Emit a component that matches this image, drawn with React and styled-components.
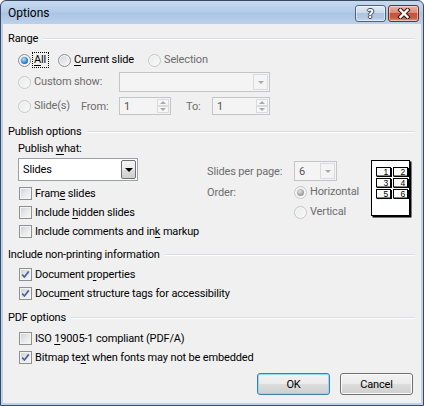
import styled, { createGlobalStyle } from "styled-components";

const GlobalStyle = createGlobalStyle`
  html, body {
    margin: 0;
    padding: 0;
    background: #ffffff;
  }
  body {
    font-family: Roboto, "Liberation Sans", sans-serif;
    font-size: 11px;
    letter-spacing: -0.15px;
    color: #000000;
  }
  * {
    box-sizing: border-box;
  }
`;

const Window = styled.div`
  width: 424px;
  height: 406px;
  display: flex;
  flex-direction: column;
  border: 1px solid #3b4b5f;
  border-radius: 6px 6px 0 0;
  overflow: hidden;
  background: linear-gradient(
    #c6d9f0 0px,
    #b4cce8 11px,
    #aac4e4 12px,
    #bcd1eb 23px,
    #bdd2ec 100%
  );
`;

const TitleBar = styled.div`
  height: 23px;
  display: flex;
  align-items: flex-start;
  padding: 4px 4px 0 7px;
`;

const Title = styled.div`
  flex: 1;
  line-height: 17px;
  font-size: 12px;
  letter-spacing: 0;
  color: #000000;
`;

const CaptionButtons = styled.div`
  display: flex;
  gap: 2px;
`;

const CaptionButton = styled.div`
  width: 31px;
  height: 17px;
  display: flex;
  align-items: center;
  justify-content: center;
  border: 1px solid ${(p) => (p.$close ? "#6e2f27" : "#52647c")};
  border-radius: 3px;
  background: ${(p) =>
    p.$close
      ? "linear-gradient(#eab0a3 0%, #da8a78 45%, #c7533f 50%, #c95c47 80%, #e09a84 100%)"
      : "linear-gradient(#e4edf7 0%, #c9d9ec 45%, #aec3de 50%, #b5c9e3 80%, #cadbef 100%)"};
  box-shadow: inset 0 0 0 1px rgba(255, 255, 255, 0.45);
`;

const HelpGlyph = styled.span`
  font-family: "DejaVu Sans", sans-serif;
  font-weight: bold;
  font-size: 12px;
  line-height: 12px;
  color: #ffffff;
  text-shadow: 1px 0 0 #34445a, -1px 0 0 #34445a, 0 1px 0 #34445a,
    0 -1px 0 #34445a;
`;

const Client = styled.div`
  flex: 1;
  margin: 0 2px 2px;
  padding: 6px 6px 0 5px;
  background: #f0f0f0;
  display: flex;
  flex-direction: column;
`;

const GroupHeader = styled.div`
  height: 16px;
  display: flex;
  align-items: center;
  gap: 5px;
  margin-top: ${(p) => p.$mt || 0}px;
`;

const GroupLine = styled.div`
  flex: 1;
  height: 1px;
  background: #d5dfe5;
  box-shadow: 0 1px 0 #ffffff;
`;

const GroupBody = styled.div`
  padding-left: 10px;
  display: flex;
  flex-direction: column;
`;

const Row = styled.div`
  height: ${(p) => p.$h || 19}px;
  margin-top: ${(p) => p.$mt || 0}px;
  display: flex;
  align-items: center;
`;

const Option = styled.div`
  display: flex;
  align-items: center;
  flex-shrink: 0;
  width: ${(p) => (p.$width ? `${p.$width}px` : "auto")};
  padding-left: ${(p) => (p.$check ? 1 : 0)}px;
`;

const Radio = styled.span`
  position: relative;
  flex-shrink: 0;
  width: 13px;
  height: 13px;
  border-radius: 50%;
  border: 1px solid ${(p) => (p.$disabled ? "#c5c7c9" : "#8a8e93")};
  background: ${(p) =>
    p.$disabled
      ? "linear-gradient(135deg, #e8e9ea, #fafafa)"
      : "linear-gradient(135deg, #cdd1d6, #fbfbfb)"};
  box-shadow: inset 0 0 0 1px #f7f7f7;

  &::after {
    content: "";
    display: ${(p) => (p.$checked ? "block" : "none")};
    position: absolute;
    left: 2px;
    top: 2px;
    width: 7px;
    height: 7px;
    border-radius: 50%;
    background: ${(p) =>
      p.$disabled
        ? "radial-gradient(circle at 40% 35%, #e4e4e4 0%, #a8a8a8 55%, #7b7b7b 100%)"
        : "radial-gradient(circle at 40% 35%, #b8e4fb 0%, #3d8fdc 50%, #0c3f80 100%)"};
  }
`;

const CheckBox = styled.span`
  flex-shrink: 0;
  width: 13px;
  height: 13px;
  display: flex;
  align-items: center;
  justify-content: center;
  border: 1px solid #8e8f8f;
  background: linear-gradient(135deg, #cbcfd4 0%, #e9eaec 55%, #f8f8f8 100%);
  box-shadow: inset 0 0 0 1px #f4f4f4;
`;

const Label = styled.span`
  margin-left: ${(p) => (p.$focus ? 1 : 3)}px;
  padding: ${(p) => (p.$focus ? "0 2px 0 1px" : "0")};
  border: ${(p) => (p.$focus ? "1px dotted #000000" : "none")};
  line-height: 14px;
  white-space: nowrap;
  color: ${(p) => (p.$disabled ? "#6d6d6d" : "#000000")};
`;

const Key = styled.span`
  text-decoration: underline;
  text-underline-offset: 2px;
`;

const PlainLabel = styled.span`
  flex-shrink: 0;
  width: ${(p) => (p.$width ? `${p.$width}px` : "auto")};
  margin-left: ${(p) => p.$ml || 0}px;
  white-space: nowrap;
  color: ${(p) => (p.$disabled ? "#6d6d6d" : "#000000")};
`;

const ComboBox = styled.div`
  width: ${(p) => p.$width}px;
  height: ${(p) => p.$height || 20}px;
  flex-shrink: 0;
  display: flex;
  align-items: stretch;
  border: 1px solid ${(p) => (p.$disabled ? "#c3c5c8" : "#9aa1aa")};
  background: ${(p) => (p.$disabled ? "#f4f4f4" : "#ffffff")};
  padding: 1px;
`;

const ComboText = styled.div`
  flex: 1;
  display: flex;
  align-items: center;
  padding-left: 3px;
  color: ${(p) => (p.$disabled ? "#555555" : "#000000")};
`;

const DropButton = styled.div`
  width: 15px;
  display: flex;
  align-items: center;
  justify-content: center;
  border: 1px solid ${(p) => (p.$disabled ? "#dadbdc" : "#707070")};
  border-radius: ${(p) => (p.$disabled ? 0 : 2)}px;
  background: ${(p) =>
    p.$disabled
      ? "#f4f4f4"
      : "linear-gradient(#f3f3f3 0%, #ebebeb 50%, #dddddd 51%, #cfcfcf 100%)"};
`;

const Arrow = styled.span`
  width: 0;
  height: 0;
  border-left: ${(p) => (p.$small ? 3 : 4)}px solid transparent;
  border-right: ${(p) => (p.$small ? 3 : 4)}px solid transparent;
  border-top: ${(p) => (p.$small ? 3 : 4)}px solid
    ${(p) => (p.$disabled ? "#a9a9a9" : "#000000")};
  ${(p) => (p.$up ? "transform: rotate(180deg);" : "")}
`;

const SpinBox = styled.div`
  width: ${(p) => p.$width}px;
  height: 18px;
  flex-shrink: 0;
  display: flex;
  border: 1px solid #c3c5c8;
  background: #f4f4f4;
  padding: 1px;
`;

const SpinButtons = styled.div`
  width: 12px;
  display: flex;
  flex-direction: column;
`;

const SpinHalf = styled.div`
  flex: 1;
  display: flex;
  align-items: center;
  justify-content: center;
  border: 1px solid #dadbdc;
  background: #f6f6f6;
`;

const PublishBody = styled.div`
  display: flex;
  margin-top: 2px;
`;

const LeftCol = styled.div`
  width: 189px;
  display: flex;
  flex-direction: column;
`;

const RightCol = styled.div`
  width: 164px;
  display: flex;
  flex-direction: column;
  padding-top: 3px;
`;

const Preview = styled.svg`
  margin-top: 2px;
  flex-shrink: 0;
`;

const ButtonBar = styled.div`
  display: flex;
  justify-content: flex-end;
  gap: 10px;
  margin-top: 6px;
  padding-right: 2px;
`;

const DialogButton = styled.div`
  width: 73px;
  height: 22px;
  display: flex;
  align-items: center;
  justify-content: center;
  border: 1px solid ${(p) => (p.$default ? "#3c7fb1" : "#707070")};
  border-radius: 3px;
  background: linear-gradient(#f2f2f2 0%, #ebebeb 50%, #dddddd 51%, #cfcfcf 100%);
  box-shadow: inset 0 0 0 1px ${(p) => (p.$default ? "#8fd9f8" : "#fbfbfb")};
`;

function RadioOption({ width, checked, disabled, focus, children }) {
  return (
    <Option $width={width}>
      <Radio $checked={checked} $disabled={disabled} />
      <Label $disabled={disabled} $focus={focus}>
        {children}
      </Label>
    </Option>
  );
}

function CheckOption({ checked, children }) {
  return (
    <Option $check>
      <CheckBox>
        {checked && (
          <svg width="9" height="9" viewBox="0 0 9 9">
            <path
              d="M1.2 4.6 L3.4 7 L7.8 1.4"
              fill="none"
              stroke="#4f6496"
              strokeWidth="1.7"
            />
          </svg>
        )}
      </CheckBox>
      <Label>{children}</Label>
    </Option>
  );
}

function Combo({ width, height, disabled, value }) {
  return (
    <ComboBox $width={width} $height={height} $disabled={disabled}>
      <ComboText $disabled={disabled}>{value}</ComboText>
      <DropButton $disabled={disabled}>
        <Arrow $disabled={disabled} $small={disabled} />
      </DropButton>
    </ComboBox>
  );
}

function Spin({ width, value }) {
  return (
    <SpinBox $width={width}>
      <ComboText $disabled>{value}</ComboText>
      <SpinButtons>
        <SpinHalf>
          <Arrow $disabled $small $up />
        </SpinHalf>
        <SpinHalf>
          <Arrow $disabled $small />
        </SpinHalf>
      </SpinButtons>
    </SpinBox>
  );
}

function LayoutPicture() {
  const cells = [
    [5, 7, "1"],
    [22, 7, "2"],
    [5, 18, "3"],
    [22, 18, "4"],
    [5, 29, "5"],
    [22, 29, "6"],
  ];
  return (
    <Preview width="41" height="58" viewBox="0 0 41 58">
      <rect x="1.5" y="1.5" width="39" height="56" fill="#000000" />
      <rect x="0.5" y="0.5" width="38" height="55" fill="#ffffff" stroke="#000000" />
      {cells.map(([x, y, n]) => (
        <g key={n}>
          <rect x={x + 1} y={y + 1} width="15" height="9" fill="#000000" />
          <rect
            x={x + 0.5}
            y={y + 0.5}
            width="14"
            height="8.5"
            fill="#ffffff"
            stroke="#000000"
          />
          <text
            x={x + 12}
            y={y + 8}
            fontSize="8.5"
            fontFamily="Liberation Sans, sans-serif"
            textAnchor="end"
            fill="#000000"
          >
            {n}
          </text>
        </g>
      ))}
    </Preview>
  );
}

export default function App() {
  return (
    <>
      <GlobalStyle />
      <Window>
        <TitleBar>
          <Title>Options</Title>
          <CaptionButtons>
            <CaptionButton>
              <HelpGlyph>?</HelpGlyph>
            </CaptionButton>
            <CaptionButton $close>
              <svg width="14" height="11" viewBox="0 0 14 11">
                <path
                  d="M3.5 2 L10.5 9 M10.5 2 L3.5 9"
                  stroke="#3c1710"
                  strokeWidth="4.4"
                  strokeLinecap="square"
                />
                <path
                  d="M3.5 2 L10.5 9 M10.5 2 L3.5 9"
                  stroke="#ffffff"
                  strokeWidth="2.4"
                  strokeLinecap="square"
                />
              </svg>
            </CaptionButton>
          </CaptionButtons>
        </TitleBar>

        <Client>
          <GroupHeader>
            <span>Range</span>
            <GroupLine />
          </GroupHeader>
          <GroupBody>
            <Row $h={20} $mt={4}>
              <RadioOption width={40} checked focus>
                <Key>A</Key>ll
              </RadioOption>
              <RadioOption width={90}>
                <Key>C</Key>urrent slide
              </RadioOption>
              <RadioOption disabled>Selection</RadioOption>
            </Row>
            <Row $h={22} $mt={1}>
              <RadioOption width={101} disabled>
                Custom show:
              </RadioOption>
              <Combo width={151} disabled value="" />
            </Row>
            <Row $h={22} $mt={2}>
              <RadioOption width={63} disabled>
                Slide(s)
              </RadioOption>
              <PlainLabel $width={38} $disabled>
                From:
              </PlainLabel>
              <Spin width={52} value="1" />
              <PlainLabel $width={26} $ml={15} $disabled>
                To:
              </PlainLabel>
              <Spin width={58} value="1" />
            </Row>
          </GroupBody>

          <GroupHeader $mt={6}>
            <span>Publish options</span>
            <GroupLine />
          </GroupHeader>
          <GroupBody>
            <Row $h={16} $mt={1}>
              <PlainLabel>
                Publish <Key>w</Key>hat:
              </PlainLabel>
            </Row>
            <PublishBody>
              <LeftCol>
                <Combo width={120} height={23} value="Slides" />
                <Row $mt={3}>
                  <CheckOption>
                    Fram<Key>e</Key> slides
                  </CheckOption>
                </Row>
                <Row>
                  <CheckOption>
                    Include <Key>h</Key>idden slides
                  </CheckOption>
                </Row>
                <Row>
                  <CheckOption>
                    Include comments and in<Key>k</Key> markup
                  </CheckOption>
                </Row>
              </LeftCol>
              <RightCol>
                <Row $h={20}>
                  <PlainLabel $width={87} $disabled>
                    Slides per page:
                  </PlainLabel>
                  <Combo width={43} disabled value="6" />
                </Row>
                <Row $h={20} $mt={1}>
                  <PlainLabel $width={87} $disabled>
                    Order:
                  </PlainLabel>
                  <RadioOption checked disabled>
                    Horizontal
                  </RadioOption>
                </Row>
                <Row $h={20}>
                  <PlainLabel $width={87} />
                  <RadioOption disabled>Vertical</RadioOption>
                </Row>
              </RightCol>
              <LayoutPicture />
            </PublishBody>
          </GroupBody>

          <GroupHeader $mt={5}>
            <span>Include non-printing information</span>
            <GroupLine />
          </GroupHeader>
          <GroupBody>
            <Row $mt={3}>
              <CheckOption checked>
                Document p<Key>r</Key>operties
              </CheckOption>
            </Row>
            <Row>
              <CheckOption checked>
                Docu<Key>m</Key>ent structure tags for accessibility
              </CheckOption>
            </Row>
          </GroupBody>

          <GroupHeader $mt={6}>
            <span>PDF options</span>
            <GroupLine />
          </GroupHeader>
          <GroupBody>
            <Row $mt={4}>
              <CheckOption>
                ISO <Key>1</Key>9005-1 compliant (PDF/A)
              </CheckOption>
            </Row>
            <Row>
              <CheckOption checked>
                Bitmap te<Key>x</Key>t when fonts may not be embedded
              </CheckOption>
            </Row>
          </GroupBody>

          <ButtonBar>
            <DialogButton $default>OK</DialogButton>
            <DialogButton>Cancel</DialogButton>
          </ButtonBar>
        </Client>
      </Window>
    </>
  );
}
